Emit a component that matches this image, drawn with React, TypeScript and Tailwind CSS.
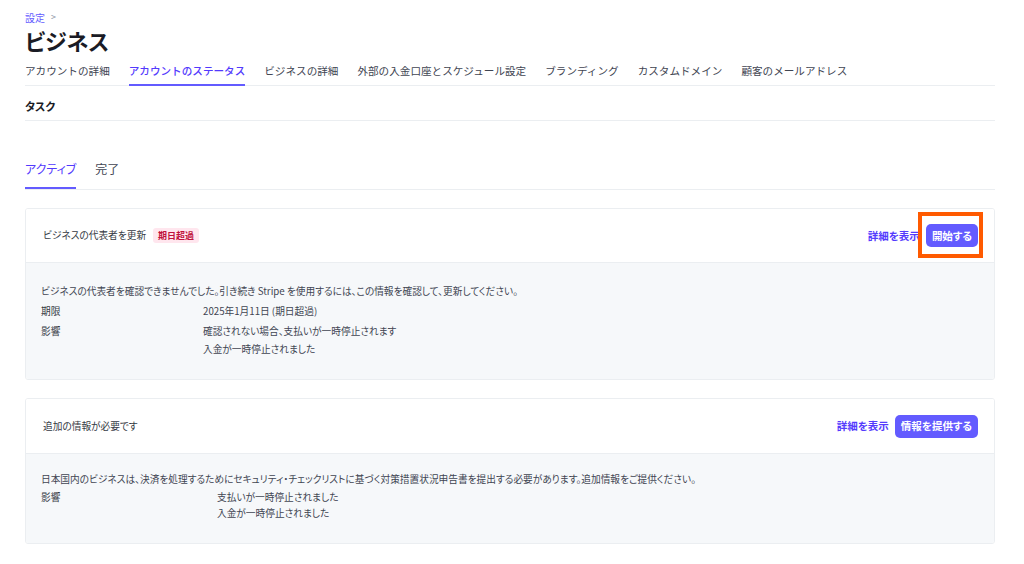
import React from 'react';

const font = "font-['Noto_Sans_CJK_JP','Noto_Sans',sans-serif] [font-feature-settings:'palt']";

const tabs = [
  'アカウントの詳細',
  'アカウントのステータス',
  'ビジネスの詳細',
  '外部の入金口座とスケジュール設定',
  'ブランディング',
  'カスタムドメイン',
  '顧客のメールアドレス',
];

interface Row {
  label: string;
  lines: string[];
}

interface TaskCardProps {
  title: string;
  badge?: string;
  action: string;
  highlight?: boolean;
  description: string;
  rows: Row[];
  labelWidth: string;
  headerH: string;
  bodyPad: string;
  lineH: string;
}

const TaskCard = ({ title, badge, action, highlight, description, rows, labelWidth, headerH, bodyPad, lineH }: TaskCardProps) => {
  return (
    <div className="border border-[#ebeef1] rounded-[3px] overflow-hidden">
      <div className={`flex items-center justify-between pl-[17px] pr-[16px] bg-white border-b border-[#ebeef1] ${headerH}`}>
        <div className="flex items-center gap-[7px]">
          <span className="text-[9.7px] text-[#353a44]">{title}</span>
          {badge && (
            <span className="text-[9px] font-bold text-[#c0123c] bg-[#ffe6ee] rounded-[3px] px-[5px] h-[15px] flex items-center">
              {badge}
            </span>
          )}
        </div>
        <div className="flex items-center gap-[6px]">
          <span className="text-[10.5px] font-bold text-[#533afd]">詳細を表示</span>
          <div className="relative">
            <button className="h-[23px] px-[6px] rounded-[5px] bg-[#635bff] text-white text-[10.5px] font-bold flex items-center">
              {action}
            </button>
            {highlight && (
              <div className="absolute -left-[8px] -top-[12px] -right-[5px] -bottom-[11px] border-[4px] border-[#ff5a00]"></div>
            )}
          </div>
        </div>
      </div>
      <div className={`bg-[#f6f8fa] pl-[15px] text-[9.7px] text-[#414552] ${bodyPad} ${lineH}`}>
        <p>{description}</p>
        {rows.map((row) => (
          <div key={row.label} className="flex mt-[2px]">
            <div className={`${labelWidth} shrink-0 text-[#353a44]`}>{row.label}</div>
            <div>
              {row.lines.map((l) => (
                <div key={l}>{l}</div>
              ))}
            </div>
          </div>
        ))}
      </div>
    </div>
  );
};

export default function App() {
  return (
    <div className={`min-h-[564px] bg-white pl-[25px] pr-[29px] ${font}`}>
      {/* breadcrumb */}
      <div className="pt-[10px] h-[24px] flex items-center gap-[6px] text-[10px]">
        <span className="text-[#635bff]">設定</span>
        <span className="text-[#8792a2] text-[9px]">&gt;</span>
      </div>
      <h1 className="mt-[2px] h-[28px] text-[22px] leading-[28px] font-bold text-[#1a1b25]">ビジネス</h1>

      {/* tabs */}
      <div className="mt-[2px] flex gap-[19px] border-b border-[#ebeef1] [font-feature-settings:normal]">
        {tabs.map((t, i) => (
          <div
            key={t}
            className={`h-[30px] pt-[7px] text-[10.6px] leading-[16px] -mb-px border-b-2 ${
              i === 1 ? 'border-[#635bff] text-[#533afd] font-medium' : 'border-transparent text-[#414552]'
            }`}
          >
            {t}
          </div>
        ))}
      </div>

      {/* section title */}
      <div className="h-[35px] pt-[7px] flex items-center border-b border-[#ebeef1] text-[11px] font-bold text-[#1a1b25]">
        タスク
      </div>

      {/* sub tabs */}
      <div className="mt-[31px] flex gap-[19px] border-b border-[#ebeef1]">
        <div className="h-[37px] pt-[9px] text-[12px] leading-[16px] -mb-px border-b-2 border-[#635bff] text-[#533afd]">
          アクティブ
        </div>
        <div className="h-[37px] pt-[9px] text-[12px] leading-[16px] text-[#414552]">完了</div>
      </div>

      <div className="mt-[18px] flex flex-col gap-[18px]">
        <TaskCard
          title="ビジネスの代表者を更新"
          badge="期日超過"
          action="開始する"
          highlight
          headerH="h-[54px]"
          bodyPad="pt-[19px] pb-[21px]"
          lineH="leading-[18px]"
          labelWidth="w-[162px]"
          description="ビジネスの代表者を確認できませんでした。引き続き Stripe を使用するには、この情報を確認して、更新してください。"
          rows={[
            { label: '期限', lines: ['2025年1月11日 (期日超過)'] },
            { label: '影響', lines: ['確認されない場合、支払いが一時停止されます', '入金が一時停止されました'] },
          ]}
        />
        <TaskCard
          title="追加の情報が必要です"
          action="情報を提供する"
          headerH="h-[55px]"
          bodyPad="pt-[17px] pb-[22px]"
          lineH="leading-[16px]"
          labelWidth="w-[176px]"
          description="日本国内のビジネスは、決済を処理するためにセキュリティ・チェックリストに基づく対策措置状況申告書を提出する必要があります。追加情報をご提供ください。"
          rows={[
            { label: '影響', lines: ['支払いが一時停止されました', '入金が一時停止されました'] },
          ]}
        />
      </div>
    </div>
  );
}
